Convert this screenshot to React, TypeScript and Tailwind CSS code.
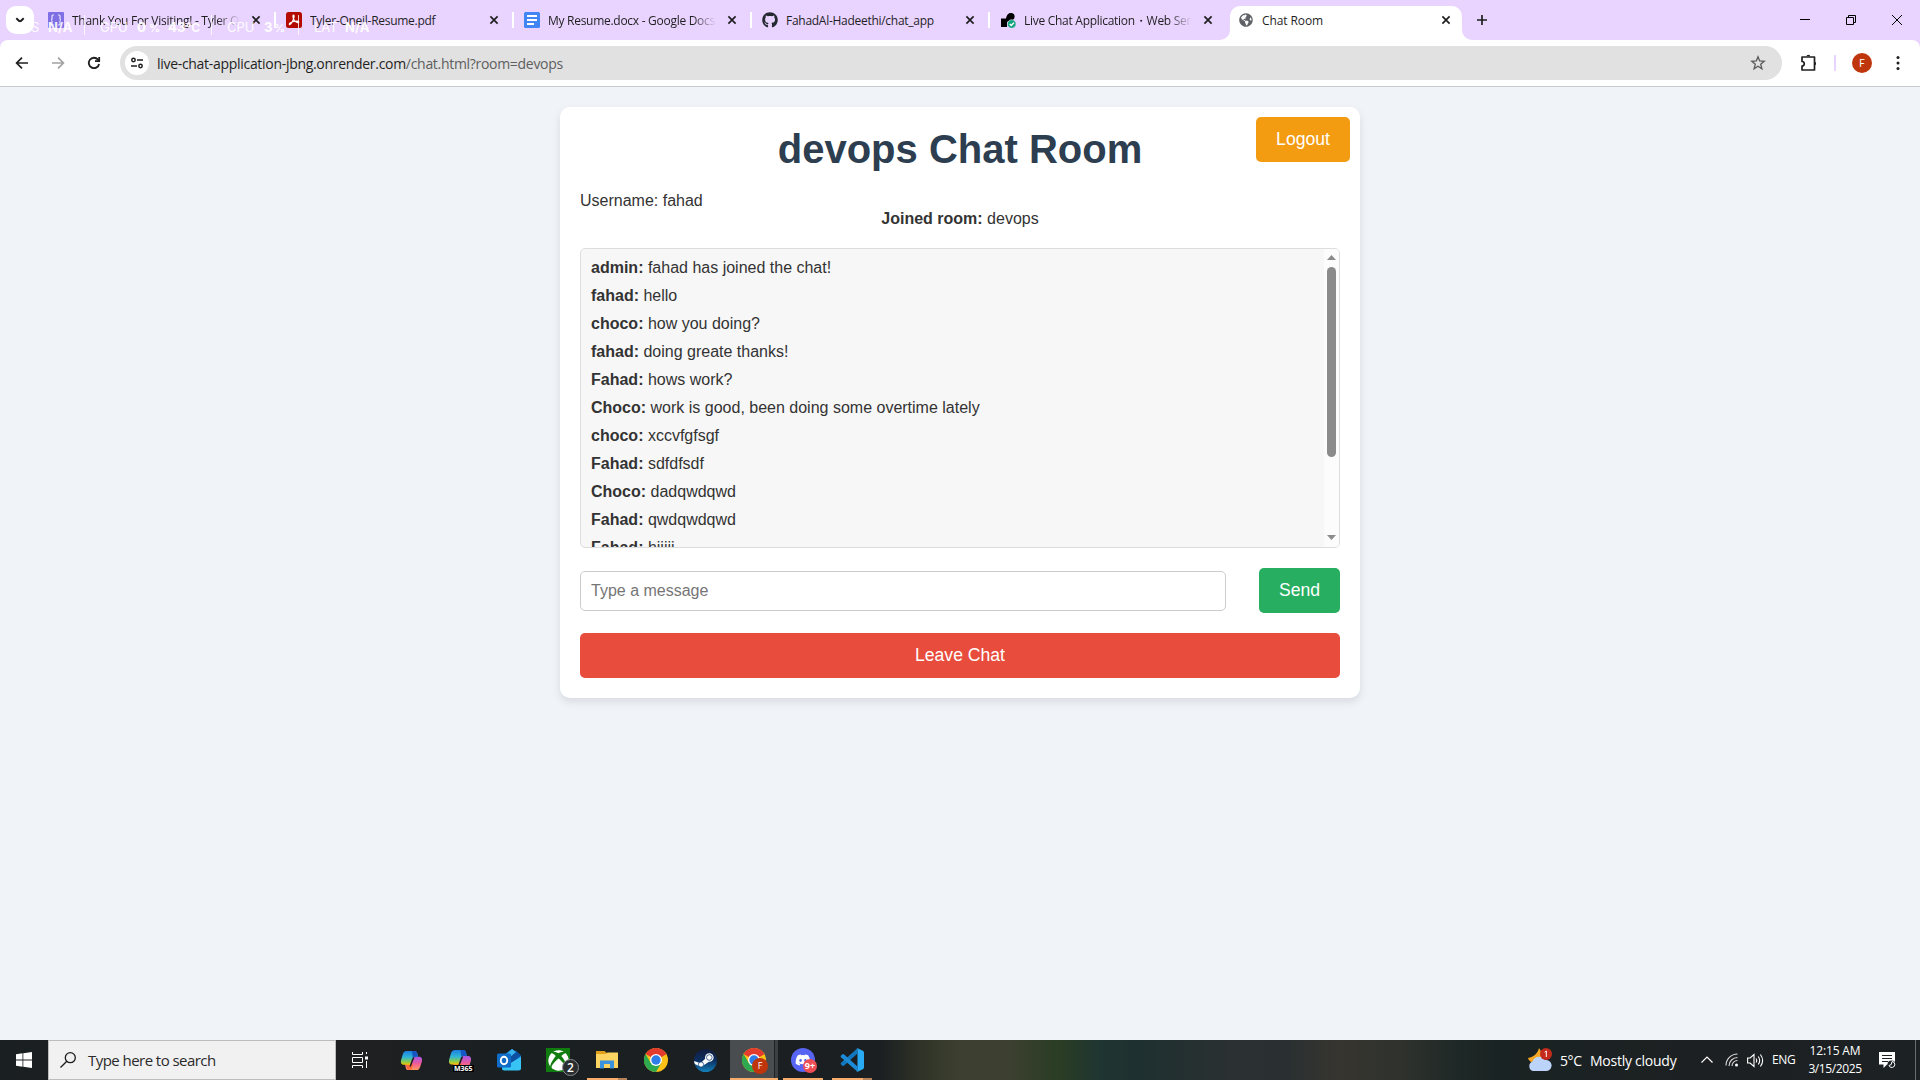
import React from "react";
import { FaGithub, FaDiscord, FaXbox, FaGlobeAmericas } from "react-icons/fa";

const ui = "font-['Open_Sans','Noto_Sans',sans-serif]";

function CloseX() {
  return (
    <svg className="size-4 shrink-0" viewBox="0 0 16 16" stroke="#1f1f1f" strokeWidth="1.7" fill="none">
      <path d="M4.4 4.4l7.2 7.2M11.6 4.4l-7.2 7.2" />
    </svg>
  );
}

function BracketIcon() {
  return (
    <svg className="size-4" viewBox="0 0 16 16">
      <rect width="16" height="16" rx="1" fill="#7f6ee4" />
      <path d="M6 3H5q-1 0-1 1v2.500q0 1.500-1 1.500 1 0 1 1.500V12q0 1 1 1h1M10 3h1q1 0 1 1v2.500q0 1.500 1 1.500-1 0-1 1.500V12q0 1-1 1h-1" fill="none" stroke="#e9e4ff" strokeWidth="1.200" />
    </svg>
  );
}

function AcrobatIcon() {
  return (
    <svg className="size-4" viewBox="0 0 16 16">
      <rect width="16" height="16" rx="2.500" fill="#b30b00" />
      <path d="M7.400 3c1.200 0 .6 3.200-.5 5.400-1 2.200-2.600 4.600-3.400 4.200-.9-.6 1.300-2.500 4-3.100 2.700-.6 5.300-.5 5.300.6 0 1.200-2.900.2-4.400-1.500C7 6.900 6.600 3 7.400 3z" fill="none" stroke="#fff" strokeWidth="1.200" />
    </svg>
  );
}

function DocsIcon() {
  return (
    <svg className="size-4" viewBox="0 0 16 16">
      <rect width="16" height="16" rx="1.500" fill="#4285f4" />
      <path d="M3 4h10M3 8h10M3 12h7" stroke="#fff" strokeWidth="2" />
    </svg>
  );
}

function RenderIcon() {
  return (
    <svg className="size-4" viewBox="0 0 16 16">
      <path d="M1 15V6.500h5C6.800 2.500 8.500 1 11 1a3.500 3.500 0 0 1 0 7.200L7 10v5z" fill="#000" />
      <circle cx="11.700" cy="12" r="4.300" fill="#12a67f" stroke="#e9d3ff" strokeWidth=".6" />
      <path d="M9.700 12l1.500 1.500 2.700-2.800" stroke="#fff" strokeWidth="1.300" fill="none" />
    </svg>
  );
}

const tabs = [
  { title: "Thank You For Visiting! - Tyler Oneil", icon: <BracketIcon />, fade: true },
  { title: "Tyler-Oneil-Resume.pdf", icon: <AcrobatIcon />, fade: false },
  { title: "My Resume.docx - Google Docs", icon: <DocsIcon />, fade: true },
  { title: "FahadAl-Hadeethi/chat_app", icon: <FaGithub className="size-4 text-[#24292f]" />, fade: false },
  { title: "Live Chat Application・Web Service", icon: <RenderIcon />, fade: true },
];

function Tab({ title, icon, fade, last }: { title: string; icon: React.ReactNode; fade: boolean; last: boolean }) {
  return (
    <div className="flex h-full w-[238px] shrink-0 items-center pl-2">
      {icon}
      <div
        className={
          "ml-2 w-[168px] shrink-0 overflow-hidden whitespace-nowrap pt-px text-[12px] tracking-[-0.28px] text-[#1f1f1f] " +
          (fade ? "[mask-image:linear-gradient(to_right,#000_86%,transparent_100%)]" : "")
        }
      >
        {title}
      </div>
      <div className="ml-2">
        <CloseX />
      </div>
      <div className={"ml-2.5 h-4 w-0.5 " + (last ? "" : "bg-white")} />
    </div>
  );
}

function HardwareOverlay() {
  return (
    <div className="pointer-events-none absolute left-[15px] top-[15px] flex h-[26px] items-center whitespace-nowrap font-['Inter',sans-serif] text-[13px] text-white/90">
      <span className="w-[33px]">FPS</span>
      <b className="w-9">N/A</b>
      <i className="mb-1.5 mr-[15px] h-5 w-px bg-white/80" />
      <span className="w-[37px]">GPU</span>
      <b className="w-[12px] font-extrabold">0</b>
      <b className="w-[19px] text-[11px]">%</b>
      <b className="w-[18px] font-extrabold">43</b>
      <b className="w-[25px] text-[12px]">°C</b>
      <i className="mb-1.5 mr-[15px] h-5 w-px bg-white/80" />
      <span className="w-[37px]">CPU</span>
      <b className="w-[10px] font-extrabold">3</b>
      <b className="w-6 text-[11px]">%</b>
      <i className="mb-1.5 mr-[15px] h-5 w-px bg-white/80" />
      <span className="w-[31px]">LAT</span>
      <b>N/A</b>
    </div>
  );
}

function TabStrip() {
  return (
    <div className="relative flex h-10 shrink-0 items-center bg-[#e9d3ff]">
      <div className="ml-1.5 flex size-7 items-center justify-center rounded-[10px] bg-white">
        <svg className="size-4" viewBox="0 0 16 16" fill="none" stroke="#1f1f1f" strokeWidth="1.900">
          <path d="M4.300 6.200L8 9.800l3.700-3.600" />
        </svg>
      </div>
      <div className="ml-1.5 flex h-full items-center">
        {tabs.map((t, i) => (
          <Tab key={t.title} {...t} last={i === tabs.length - 1} />
        ))}
      </div>
      <div className="relative flex h-[34px] w-[232px] items-center self-end rounded-t-[10px] bg-white pl-2 pb-1.5">
        <svg className="absolute -left-2.5 bottom-0 size-2.5" viewBox="0 0 10 10" fill="#fff">
          <path d="M10 0v10H0A10 10 0 0 0 10 0z" />
        </svg>
        <svg className="absolute -right-2.5 bottom-0 size-2.5" viewBox="0 0 10 10" fill="#fff">
          <path d="M0 0v10h10A10 10 0 0 1 0 0z" />
        </svg>
        <FaGlobeAmericas className="ml-px size-[14px] text-[#5f6368]" />
        <span className="ml-[9px] w-[176px] pt-px text-[12px] tracking-[-0.1px] text-[#1f1f1f]">Chat Room</span>
        <CloseX />
      </div>
      <svg className="ml-3 size-4" viewBox="0 0 16 16" stroke="#1f1f1f" strokeWidth="1.700">
        <path d="M8 3v10M3 8h10" />
      </svg>
      <div className="ml-auto flex h-full items-center gap-9 pr-[18px]">
        <svg className="size-2.5" viewBox="0 0 10 10" stroke="#000">
          <path d="M0 4.500h10" />
        </svg>
        <svg className="size-2.5" viewBox="0 0 10 10" stroke="#000" fill="none">
          <path d="M.5 2.500h7v7h-7zM2.500 2V.5h7v7H8" />
        </svg>
        <svg className="size-2.5" viewBox="0 0 10 10" stroke="#000">
          <path d="M0 0l10 10M10 0L0 10" />
        </svg>
      </div>
      <HardwareOverlay />
    </div>
  );
}

function Toolbar() {
  return (
    <div className="h-[47px] shrink-0 bg-[#e9d3ff]">
      <div className="flex h-[47px] items-center rounded-t-[8px] border-b border-[#c9cccf] bg-white">
        <svg className="ml-[14px] size-4" viewBox="0 0 16 16" fill="none" stroke="#1f1f1f" strokeWidth="1.700">
          <path d="M14 8H3M8 2.600L2.600 8 8 13.400" />
        </svg>
        <svg className="ml-5 size-4" viewBox="0 0 16 16" fill="none" stroke="#a2a2a2" strokeWidth="1.700">
          <path d="M2 8h11M8 2.600L13.400 8 8 13.400" />
        </svg>
        <svg className="ml-5 size-4" viewBox="0 0 16 16" fill="none" stroke="#1f1f1f" strokeWidth="1.800">
          <path d="M13.100 9A5.200 5.200 0 1 1 12 4.600L13.200 6" />
          <path d="M13.200 2v4.200H9" />
        </svg>
        <div className="ml-[18px] flex h-[34px] w-[1662px] items-center rounded-full bg-[#e1e1e1]">
          <div className="ml-[5px] flex size-6 items-center justify-center rounded-full bg-white">
            <svg className="size-[14px]" viewBox="0 0 14 14" fill="none" stroke="#1f1f1f" strokeWidth="1.500">
              <circle cx="3.500" cy="4" r="1.700" />
              <path d="M7 4h6M1 10h6" />
              <circle cx="10.500" cy="10" r="1.700" />
            </svg>
          </div>
          <span className="ml-2 whitespace-nowrap text-[14px] tracking-[-0.3px] text-[#1f1f1f]">
            live-chat-application-jbng.onrender.com<span className="text-[#5e5e5e]">/chat.html?room=devops</span>
          </span>
          <svg className="ml-auto mr-4 size-4" viewBox="0 0 16 16" fill="none" stroke="#5a5a5a" strokeWidth="1.300">
            <path d="M8 1.800l1.700 4.200 4.500.3-3.500 2.900 1.200 4.500L8 11.200l-3.900 2.500 1.200-4.500L1.800 6.300l4.500-.3z" />
          </svg>
        </div>
        <svg className="ml-[18px] size-[18px]" viewBox="0 0 18 18" fill="none" stroke="#1f1f1f" strokeWidth="1.700">
          <path d="M2 3h12.500v13H2v-4c3 0 3-4.500 0-4.500z" strokeLinejoin="round" />
          <path d="M6.500 2.300a1.900 1.600 0 0 1 3.800 0zM15 7.700a1.600 1.900 0 0 1 0 3.600z" fill="#1f1f1f" stroke="none" />
        </svg>
        <div className="ml-4 h-4 w-0.5 bg-[#e9d3ff]" />
        <div className="ml-4 flex size-5 items-center justify-center rounded-full bg-[#bf360c] text-[10px] text-white font-['Roboto',sans-serif]">F</div>
        <svg className="ml-[18px] size-4" viewBox="0 0 16 16" fill="#1f1f1f">
          <circle cx="8" cy="2.500" r="1.500" />
          <circle cx="8" cy="8" r="1.500" />
          <circle cx="8" cy="13.500" r="1.500" />
        </svg>
      </div>
    </div>
  );
}

const messages = [
  ["admin", "fahad has joined the chat!"],
  ["fahad", "hello"],
  ["choco", "how you doing?"],
  ["fahad", "doing greate thanks!"],
  ["Fahad", "hows work?"],
  ["Choco", "work is good, been doing some overtime lately"],
  ["choco", "xccvfgfsgf"],
  ["Fahad", "sdfdfsdf"],
  ["Choco", "dadqwdqwd"],
  ["Fahad", "qwdqwdqwd"],
  ["Fahad", "hiiiii"],
];

function ChatPage() {
  return (
    <main className="flex-1 bg-[#f0f4f8] pt-5 font-['Liberation_Sans',Arial,sans-serif] text-[16px] leading-[18px] text-[#333]">
      <div className="relative mx-auto flex h-[591px] w-[800px] flex-col rounded-[10px] bg-white p-5 shadow-[0_4px_8px_rgba(0,0,0,0.1)]">
        <h1 className="text-center text-[40px] font-bold leading-[45px] text-[#2c3e50]">devops Chat Room</h1>
        <button className="absolute right-2.5 top-2.5 h-[45px] w-[94px] rounded-[5px] bg-[#f39c12] pb-0.5 text-[17.6px] text-white">Logout</button>
        <div className="mt-5">Username: fahad</div>
        <div className="text-center">
          <b>Joined room:</b> devops
        </div>
        <div className="mt-5 flex h-[300px] shrink-0 overflow-hidden rounded-[5px] border border-[#ddd] bg-[#f7f7f7]">
          <div className="flex flex-1 flex-col gap-2.5 pl-2.5 pt-2.5">
            {messages.map(([who, text], i) => (
              <div key={i} className="shrink-0">
                <b>{who}:</b> {text}
              </div>
            ))}
          </div>
          <div className="flex w-[15px] flex-col items-center bg-[#fcfcfc] pt-1.5">
            <svg className="h-[5px] w-[9px]" viewBox="0 0 9 5" fill="#8b8b8b">
              <path d="M4.500 0L9 5H0z" />
            </svg>
            <div className="mt-[7px] h-[190px] w-[9px] rounded-full bg-[#8b8b8b]" />
            <svg className="mb-[7px] mt-auto h-[5px] w-[9px]" viewBox="0 0 9 5" fill="#8b8b8b">
              <path d="M4.500 5L9 0H0z" />
            </svg>
          </div>
        </div>
        <div className="mt-5 flex items-center justify-between">
          <input className="h-10 w-[646px] rounded-[5px] border border-[#ccc] bg-white px-2.5 placeholder:text-[#757575]" placeholder="Type a message" />
          <button className="h-[45px] w-[81px] rounded-[5px] bg-[#27ae60] pb-0.5 text-[17.6px] text-white">Send</button>
        </div>
        <button className="mt-5 h-[45px] w-full rounded-[5px] bg-[#e74c3c] pb-0.5 text-[17.6px] text-white">Leave Chat</button>
      </div>
    </main>
  );
}

function Copilot({ id, small = false }: { id: string; small?: boolean }) {
  return (
    <svg className={small ? "size-[23px]" : "size-6"} viewBox="0 0 24 24">
      <defs>
        <linearGradient id={id + "a"} x1="0" y1="0" x2="0" y2="1">
          <stop offset="0" stopColor="#1c7fe0" />
          <stop offset=".45" stopColor="#2fb3d6" />
          <stop offset=".75" stopColor="#7ccb5a" />
          <stop offset="1" stopColor="#f5c400" />
        </linearGradient>
        <linearGradient id={id + "b"} x1="0" y1="0" x2="0" y2="1">
          <stop offset="0" stopColor="#a457e8" />
          <stop offset=".5" stopColor="#ee5a9a" />
          <stop offset="1" stopColor="#ff9a5a" />
        </linearGradient>
      </defs>
      <path d="M17 22H8.500C7 22 6.400 21 6 19.500L5.200 16h3.300c1.600 0 2.300-1 2.800-2.500L13.500 8H20c3 0 3.500 2.500 2.700 5.500L20.900 19c-.7 2-1.900 3-3.900 3z" fill={"url(#" + id + "b)"} />
      <path d="M6.500 15.500L7 19.500Q7.500 22 10 22q2 0 2.800-2.500l1-3.500z" fill="#ff6a3d" />
      <path d="M7 2h8.500c1.500 0 2 1 2.500 2.500L18.800 8h-3.300c-1.600 0-2.300 1-2.800 2.500L10.500 16.500H4c-3 0-3.500-2.500-2.700-5.500l1.800-6C3.800 3 5 2 7 2z" fill={"url(#" + id + "a)"} />
      <path d="M12.400 2H15.500c1.500 0 2 1 2.500 2.500l.8 3.500h-3.300c-1 0-1.600.4-2 1z" fill="#1656c4" />
      <path d="M13.300 9l2-.8-3.600 9.300q-.6 1.500-1.800 1l.8-2.500z" fill="#1b1f21" />
    </svg>
  );
}

function ChromeIcon() {
  return (
    <svg className="size-6" viewBox="0 0 24 24">
      <circle cx="12" cy="12" r="12" fill="#fbc116" />
      <path d="M12 12L1.600 6A12 12 0 0 1 22.400 6z" fill="#e33b2e" />
      <path d="M1.600 6A12 12 0 0 0 12 24l5.200-9L12 12 6.800 15z" fill="#2da94f" />
      <path d="M12 6h10.400L12 12z" fill="#e33b2e" />
      <circle cx="12" cy="12" r="6" fill="#fff" />
      <circle cx="12" cy="12" r="4.700" fill="#2f7de9" />
    </svg>
  );
}

function OutlookIcon() {
  return (
    <svg className="size-6" viewBox="0 0 24 24">
      <path d="M5 8L15 1l9 7v12q0 2-2 2H7q-2 0-2-2z" fill="#1a86dc" />
      <path d="M13 4.500l6-2 5 5-10 8z" fill="#0d4fa0" />
      <path d="M5 20L24 9v11q0 2.500-2.500 2.500H7q-2 0-2-2z" fill="#37c3f3" />
      <path d="M9 7l6-6 4 3-8 7z" fill="#38b4f0" />
      <rect x="0" y="5.500" width="14" height="14" rx="1.500" fill="#0f6cc8" />
      <ellipse cx="7" cy="12.500" rx="3.200" ry="3.700" fill="none" stroke="#fff" strokeWidth="1.900" />
    </svg>
  );
}

function FolderIcon() {
  return (
    <svg className="h-[20px] w-[22px]" viewBox="0 0 22 20">
      <path d="M0 1h8.500L11 3h11v15H0z" fill="#e0a01c" />
      <path d="M0 4h10l1.500-1.500H22V18H0z" fill="#fcd462" />
      <path d="M4 18.500V10.500h14v8h-4V14H8v4.500z" fill="#3a93dc" />
    </svg>
  );
}

function SteamIcon() {
  return (
    <svg className="size-[23px]" viewBox="0 0 23 23">
      <defs>
        <linearGradient id="steam" x1="0" y1="0" x2="0" y2="1">
          <stop offset="0" stopColor="#111c3f" />
          <stop offset=".5" stopColor="#0c2f62" />
          <stop offset="1" stopColor="#1381bb" />
        </linearGradient>
      </defs>
      <circle cx="11.500" cy="11.500" r="11.500" fill="url(#steam)" />
      <path d="M0 12l6.500 2.300L12 9l3 3.700-5 3.300-3 2L.8 15z" fill="#fff" />
      <circle cx="15.300" cy="8.500" r="4.300" fill="#fff" />
      <circle cx="15.300" cy="8.500" r="2.800" fill="#fff" stroke="#19467c" strokeWidth=".8" />
      <circle cx="7" cy="15.500" r="2.600" fill="#fff" stroke="#19467c" strokeWidth=".8" />
    </svg>
  );
}

function VsCodeIcon() {
  return (
    <svg className="size-6" viewBox="0 0 24 24">
      <path d="M17.500 5.500V0.200L1 14.800q-.8.800 0 1.600l1.500 1.300q.7.500 1.400 0z" fill="#1277bd" />
      <path d="M17.500 18.500v5.300L1 9.200q-.8-.8 0-1.600l1.500-1.300q.7-.5 1.400 0z" fill="#1b8bd6" />
      <path d="M17.500.2l5.300 2.500q1.200.6 1.200 1.800v15q0 1.200-1.200 1.800l-5.300 2.500q-.7.200-1.300-.4 1.300.6 1.300-1V1.600q0-1.600-1.300-1 .6-.6 1.300-.4z" fill="#2aabf5" />
    </svg>
  );
}

function Cell({ children, className = "", bar = "" }: { children: React.ReactNode; className?: string; bar?: string }) {
  return (
    <div className={"relative flex h-10 w-[49px] shrink-0 items-center justify-center pr-px " + className}>
      {children}
      {bar === "stack" && (
        <div className="absolute bottom-0 left-1 flex h-0.5 w-10">
          <i className="flex-1 bg-[#f9ad6c]" />
          <i className="w-[9px] bg-[#b5825a]" />
        </div>
      )}
      {bar === "plain" && <div className="absolute bottom-0 left-1 h-0.5 w-10 bg-[#f9ad6c]" />}
    </div>
  );
}

function Taskbar() {
  return (
    <div className="flex h-10 shrink-0 items-center bg-[linear-gradient(to_right,#1a1f22_0,#1f2021_340px,#1a1f22_500px,#1b1f22_880px,#2c3026_915px,#3c3f2f_955px,#3d4030_1005px,#2a3d25_1060px,#1f3531_1100px,#1e302f_1140px,#2b3032_1230px,#2a3031_1290px,#37352f_1340px,#2f322d_1400px,#1e2826_1460px,#1a2323_1500px,#1d2022_1700px,#1c2124_1920px)] text-white">
      <div className="flex w-12 justify-center">
        <svg className="size-4" viewBox="0 0 16 16" fill="#fff">
          <path d="M0 2.200l6.500-.9v6.300H0zM7.300 1.200L16 0v7.600H7.300zM0 8.400h6.500v6.300L0 13.800zM7.300 8.400H16V16l-8.700-1.200z" />
        </svg>
      </div>
      <div className="flex h-10 w-[288px] items-center border border-[#bdbdbd] bg-[#f1f1f1]">
        <svg className="ml-[11px] size-4" viewBox="0 0 16 16" fill="none" stroke="#1b1b1b" strokeWidth="1.300">
          <circle cx="10.300" cy="5.700" r="5" />
          <path d="M6.800 9.200L.5 15.500" />
        </svg>
        <span className="ml-3 whitespace-nowrap text-[15px] tracking-[-0.55px] text-[#2b2b2b]">Type here to search</span>
      </div>
      <div className="ml-4 mr-[19px] flex w-4">
        <svg className="size-4" viewBox="0 0 16 16" fill="none" stroke="#fff">
          <path d="M.5 0v2.500h10V0M.5 16v-2.500h10V16M.5 5.500h10v5H.5zM14.500 0v2M14.500 9v7" />
          <path d="M13 4.500h3v3h-3z" fill="#fff" stroke="none" />
        </svg>
      </div>
      <Cell>
        <Copilot id="c" small />
      </Cell>
      <Cell>
        <Copilot id="m" />
        <span className="absolute bottom-2 left-[17px] bg-black px-px text-[7px] font-bold leading-[7px]">M365</span>
      </Cell>
      <Cell>
        <OutlookIcon />
      </Cell>
      <Cell>
        <div className="flex size-6 items-center justify-center bg-[#107c10]">
          <FaXbox className="size-[21px] text-white" />
        </div>
        <span className="absolute left-[28px] top-[19px] flex size-[17px] items-center justify-center rounded-full border border-[#8a8a8a] bg-[#2a2d2f] text-[12px] font-semibold">2</span>
      </Cell>
      <Cell bar="stack">
        <FolderIcon />
      </Cell>
      <Cell>
        <ChromeIcon />
      </Cell>
      <Cell>
        <SteamIcon />
      </Cell>
      <div className="relative flex h-10 w-12 items-center justify-center border-b-2 border-[#f9ad6c] bg-[#4a4d4f] pt-0.5">
        <ChromeIcon />
        <i className="absolute right-0 top-0 h-[38px] w-1 border-l border-[#222] bg-[#3c3f41]" />
        <span className="absolute left-[22px] top-[18px] flex size-4 items-center justify-center rounded-full bg-[#bf360c] text-[9px]">F</span>
      </div>
      <Cell bar="plain" className="ml-px">
        <div className="flex size-6 items-center justify-center rounded-full bg-[#5865f2]">
          <FaDiscord className="size-4 text-white" />
        </div>
        <span className="absolute left-[24px] top-[19px] flex size-[14px] items-center justify-center rounded-full bg-[#ee4e53] text-[9px] font-bold">9+</span>
      </Cell>
      <Cell bar="stack">
        <VsCodeIcon />
      </Cell>
      <div className="ml-auto flex h-10 items-center">
        <svg className="size-6" viewBox="0 0 24 24">
          <path d="M11 0c-1 5-5 9-11 10 1 4 6 6 10 4s5-9 1-14z" fill="#f6a623" />
          <path d="M5 23a5 5 0 0 1-.5-9.500A7 7 0 0 1 17 12a5.500 5.500 0 0 1 2 11z" fill="#bcd3fa" />
          <circle cx="18" cy="6" r="6" fill="#c42b1c" />
          <path d="M16.700 4.300L18.300 3v6" stroke="#fff" fill="none" />
        </svg>
        <span className="ml-2 w-[30px] whitespace-nowrap text-[14px] tracking-[-0.4px]">5°C</span>
        <span className="w-[111px] whitespace-nowrap text-[14px] tracking-[-0.25px]">Mostly cloudy</span>
        <svg className="h-3 w-3" viewBox="0 0 12 12" fill="none" stroke="#fff" strokeWidth="1.200">
          <path d="M.5 8.500L6 3l5.500 5.500" />
        </svg>
        <svg className="ml-3 size-[14px]" viewBox="0 0 14 14" fill="none" stroke="#ddd" strokeWidth="1.100">
          <path d="M1 12.500A11.500 11.500 0 0 1 12.500 1M4 13A8.500 8.500 0 0 1 12.500 4.500M7 13a5.500 5.500 0 0 1 5.500-5.500" />
          <circle cx="11.500" cy="12" r="1.500" fill="#fff" stroke="none" />
        </svg>
        <svg className="ml-2 size-[17px]" viewBox="0 0 17 17" fill="none" stroke="#fff" strokeWidth="1.100">
          <path d="M.6 6h2.500L7 2.500v12L3.100 11H.6zM9 6.500q1.500 2 0 4M11.200 4.500q3 4 0 8M13.400 2.500q4.500 6 0 12" />
        </svg>
        <span className="ml-2 w-[24px] whitespace-nowrap text-[12px] tracking-[-0.3px]">ENG</span>
        <div className="ml-3 w-[54px] whitespace-nowrap text-center text-[12px] leading-[18px] tracking-[-0.4px]">
          <div className="tracking-[-0.15px]">12:15 AM</div>
          <div>3/15/2025</div>
        </div>
        <svg className="ml-[17px] size-[17px]" viewBox="0 0 17 17">
          <path d="M0 0h16v12.500h-8L4.500 16v-3.500H0z" fill="#fff" />
          <path d="M3 3.500h10M3 6.500h10M3 9.500h6" stroke="#1c2124" />
          <circle cx="12.500" cy="12.500" r="4" fill="#1c2124" />
          <path d="M13 9.500a3 3 0 1 1-3 4q3 0 3-4z" fill="none" stroke="#fff" />
        </svg>
        <i className="ml-[19px] mr-1 h-10 w-px bg-[#6b6e70]" />
      </div>
    </div>
  );
}

export default function App() {
  return (
    <div className={"flex h-[1080px] w-[1920px] flex-col overflow-hidden " + ui}>
      <TabStrip />
      <Toolbar />
      <ChatPage />
      <Taskbar />
    </div>
  );
}
